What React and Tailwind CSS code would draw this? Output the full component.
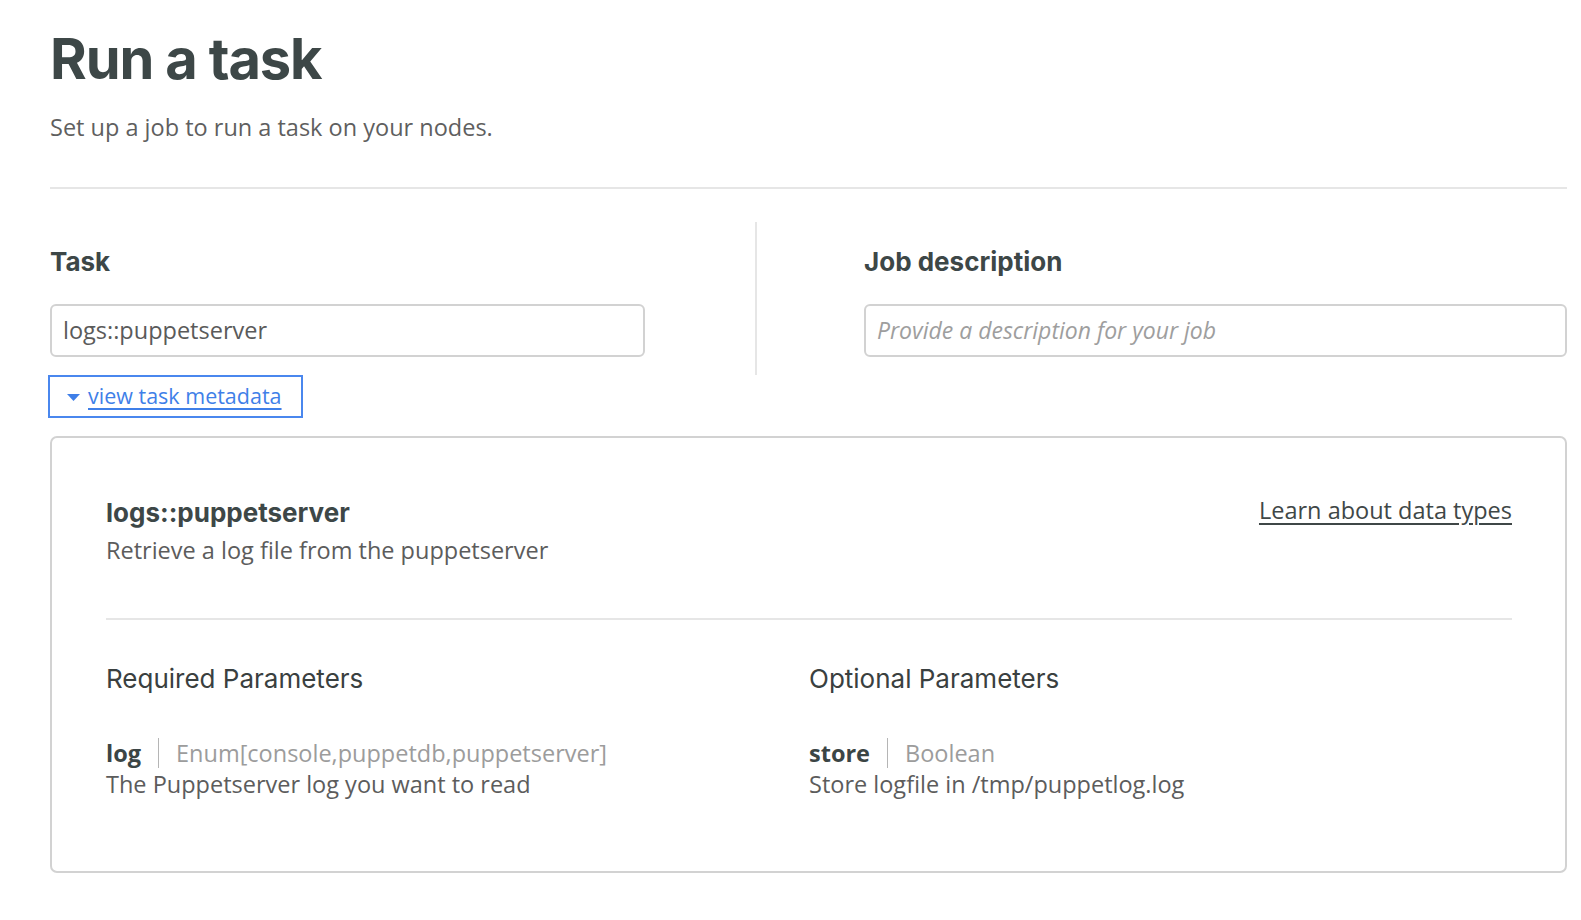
import React from "react";

const head = { fontFamily: "Inter, 'Liberation Sans', sans-serif" };
const body = { fontFamily: "'Open Sans', 'Liberation Sans', sans-serif" };

function Param({ name, type, desc }) {
  return (
    <div style={body}>
      <div className="flex items-center text-[23.5px] leading-[32px]">
        <span className="font-bold text-[#3b4545]">{name}</span>
        <span className="mx-[17px] h-[30px] w-px bg-[#b5b5b5]" />
        <span className="text-[#9c9c9c]">{type}</span>
      </div>
      <div className="text-[23.5px] leading-[31px] text-[#5c5c5c]">{desc}</div>
    </div>
  );
}

export default function App() {
  return (
    <div className="min-h-screen bg-white pl-[50px] pr-[14px] pt-[31px] pb-10">
      <h1
        style={head}
        className="text-[56px] leading-none font-bold tracking-[-0.02em] text-[#3d4747]"
      >
        Run a task
      </h1>
      <p style={body} className="mt-[24px] text-[23.5px] leading-[32px] text-[#5f5f5f]">
        Set up a job to run a task on your nodes.
      </p>
      <div className="mt-[44px] h-[2px] bg-[#e6e6e6]" />

      <div className="mt-[33px] flex">
        <div className="w-[705px] pt-[24px] pb-[18px]">
          <div style={head} className="text-[26px] leading-[32px] font-bold text-[#3d4747]">
            Task
          </div>
          <div
            style={body}
            className="mt-[26px] flex h-[53px] w-[595px] items-center rounded-[6px] border-2 border-[#d2d2d2] px-[11px] text-[23.5px] text-[#5a5a5a]"
          >
            logs::puppetserver
          </div>
        </div>
        <div className="w-[2px] bg-[#e6e6e6]" />
        <div className="flex-1 pl-[107px] pt-[24px] pb-[18px]">
          <div style={head} className="text-[26px] leading-[32px] font-bold text-[#3d4747]">
            Job description
          </div>
          <div
            style={body}
            className="mt-[26px] flex h-[53px] items-center rounded-[6px] border-2 border-[#d2d2d2] px-[11px] text-[23px] italic text-[#9e9e9e]"
          >
            Provide a description for your job
          </div>
        </div>
      </div>

      <div className="-ml-[2px] flex">
        <div
          style={body}
          className="flex h-[43px] w-[255px] items-center border-2 border-[#4a87ee] pl-[17px] text-[21.5px] text-[#3f7fe8]"
        >
          <svg width="13" height="8" viewBox="0 0 13 8" className="mr-[8px] mt-[2px]">
            <polygon points="0,0 13,0 6.5,7" fill="#3f7fe8" />
          </svg>
          <span className="underline underline-offset-[4px] decoration-[2px]">view task metadata</span>
        </div>
      </div>

      <div className="mt-[18px] rounded-[7px] border-2 border-[#d2d2d2] pl-[54px] pr-[53px] pt-[59px] pb-[71px]">
        <div className="flex items-start justify-between">
          <div>
            <div style={head} className="text-[26px] leading-[32px] font-bold text-[#3d4747]">
              logs::puppetserver
            </div>
            <div style={body} className="mt-[5px] text-[23.5px] leading-[32px] text-[#5c5c5c]">
              Retrieve a log file from the puppetserver
            </div>
          </div>
          <a
            href="#"
            style={body}
            className="mt-[-3px] text-[23.5px] leading-[32px] text-[#3f4747] underline underline-offset-[4px]"
          >
            Learn about data types
          </a>
        </div>
        <div className="mt-[52px] h-[2px] bg-[#e6e6e6]" />
        <div className="mt-[43px] grid grid-cols-2">
          <div>
            <div style={head} className="text-[26px] leading-[32px] text-[#3a4040]">
              Required Parameters
            </div>
            <div className="mt-[42px]">
              <Param
                name="log"
                type="Enum[console,puppetdb,puppetserver]"
                desc="The Puppetserver log you want to read"
              />
            </div>
          </div>
          <div>
            <div style={head} className="text-[26px] leading-[32px] text-[#3a4040]">
              Optional Parameters
            </div>
            <div className="mt-[42px]">
              <Param name="store" type="Boolean" desc="Store logfile in /tmp/puppetlog.log" />
            </div>
          </div>
        </div>
      </div>
    </div>
  );
}
